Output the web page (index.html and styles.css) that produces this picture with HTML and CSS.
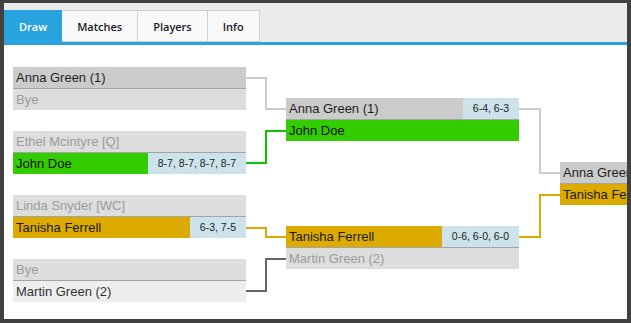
FILE: index.html
```html
<!DOCTYPE html>
<html lang="en">
<head>
    <meta charset="UTF-8">
    <meta name="viewport" content="width=device-width, initial-scale=1.0">
    <title>Draw</title>
    <link rel="stylesheet" href="styles.css">
</head>
<body>
    <div class="panel">
        <div class="tabs">
            <a href="#" class="tab active">Draw</a>
            <a href="#" class="tab">Matches</a>
            <a href="#" class="tab">Players</a>
            <a href="#" class="tab">Info</a>
        </div>

        <div class="bracket">
            <!-- Primera ronda -->
            <div class="round round-1">
                <div class="match">
                    <div class="slot seed"><span class="name">Anna Green (1)</span></div>
                    <div class="slot lost"><span class="name">Bye</span></div>
                </div>
                <div class="match">
                    <div class="slot lost"><span class="name">Ethel Mcintyre [Q]</span></div>
                    <div class="slot green"><span class="name">John Doe</span><span class="score">8-7, 8-7, 8-7, 8-7</span></div>
                </div>
                <div class="match">
                    <div class="slot lost"><span class="name">Linda Snyder [WC]</span></div>
                    <div class="slot gold"><span class="name">Tanisha Ferrell</span><span class="score">6-3, 7-5</span></div>
                </div>
                <div class="match">
                    <div class="slot lost"><span class="name">Bye</span></div>
                    <div class="slot plain"><span class="name">Martin Green (2)</span></div>
                </div>
            </div>

            <!-- Semifinales -->
            <div class="round round-2">
                <div class="match">
                    <div class="slot seed"><span class="name">Anna Green (1)</span><span class="score">6-4, 6-3</span></div>
                    <div class="slot green"><span class="name">John Doe</span></div>
                </div>
                <div class="match">
                    <div class="slot gold"><span class="name">Tanisha Ferrell</span><span class="score">0-6, 6-0, 6-0</span></div>
                    <div class="slot lost"><span class="name">Martin Green (2)</span></div>
                </div>
            </div>

            <!-- Final -->
            <div class="round round-3">
                <div class="match">
                    <div class="slot seed"><span class="name">Anna Green (1)</span></div>
                    <div class="slot gold"><span class="name">Tanisha Ferrell</span></div>
                </div>
            </div>

            <svg class="links" width="623" height="274" viewBox="0 0 623 274">
                <path class="link-gray" d="M242 33 H262 V64 H282"/>
                <path class="link-green" d="M242 118 H262 V86 H282"/>
                <path class="link-gold" d="M242 183 H262 V192 H282"/>
                <path class="link-dark" d="M242 246 H262 V214 H282"/>
                <path class="link-gray" d="M515 64 H536 V128 H556"/>
                <path class="link-gold" d="M515 192 H536 V150 H556"/>
            </svg>
        </div>
    </div>
</body>
</html>
```

FILE: styles.css
```css
* {
    margin: 0;
    padding: 0;
    box-sizing: border-box;
}

body {
    background: #414141;
    padding: 3px 4px 4px 4px;
    font-family: 'Liberation Sans', Arial, sans-serif;
    color: #222;
}

.panel {
    background: white;
    height: 316px;
    overflow: hidden;
}

/* Pestañas */
.tabs {
    display: flex;
    align-items: flex-end;
    height: 42px;
    background: #ebebeb;
    border-bottom: 3px solid #29a3dd;
}

.tab {
    display: block;
    height: 32px;
    line-height: 31px;
    padding: 0 15px;
    font-family: 'Open Sans', sans-serif;
    font-size: 11px;
    font-weight: 600;
    color: #1a1a2a;
    text-decoration: none;
    background: #f8f8f8;
    border: 1px solid #cfcfcf;
    border-left: none;
}

.tab.active {
    background: #29a3dd;
    color: white;
    border-color: #29a3dd;
    padding: 0 14px 0 15px;
}

/* Cuadro del torneo */
.bracket {
    position: relative;
    display: flex;
    height: 274px;
    padding: 0 0 0 9px;
}

.round {
    display: flex;
    flex-direction: column;
    flex: 0 0 233px;
    margin-right: 40px;
}

.round-1 {
    padding-top: 22px;
    gap: 21px;
}

.round-2 {
    padding-top: 53px;
    gap: 85px;
}

.round-3 {
    padding-top: 117px;
    margin-left: 1px;
}

.match {
    width: 233px;
}

.slot {
    display: flex;
    height: 21px;
    line-height: 21px;
    font-size: 13px;
}

.slot:first-child {
    height: 22px;
    border-bottom: 1px solid #a3a3a3;
}

.name {
    flex: 1;
    padding-left: 3px;
    white-space: nowrap;
    overflow: hidden;
}

.score {
    background: #cde3eb;
    padding: 0 10px;
    font-size: 10.5px;
    color: #222;
}

.seed {
    background: #cbcbcb;
    color: #1e1e1e;
}

.lost {
    background: #dddddd;
    color: #9c9c9c;
}

.plain {
    background: #eeeeee;
    color: #333;
}

.green {
    background: #33cc00;
    color: #111;
}

.gold {
    background: #ddaa00;
    color: #1a1a1a;
}

/* Líneas entre rondas */
.links {
    position: absolute;
    left: 0;
    top: 0;
    fill: none;
    stroke-width: 2;
    shape-rendering: crispEdges;
}

.link-gray {
    stroke: #cccccc;
}

.link-green {
    stroke: #11c000;
}

.link-gold {
    stroke: #ddaa00;
}

.link-dark {
    stroke: #666666;
}
```
